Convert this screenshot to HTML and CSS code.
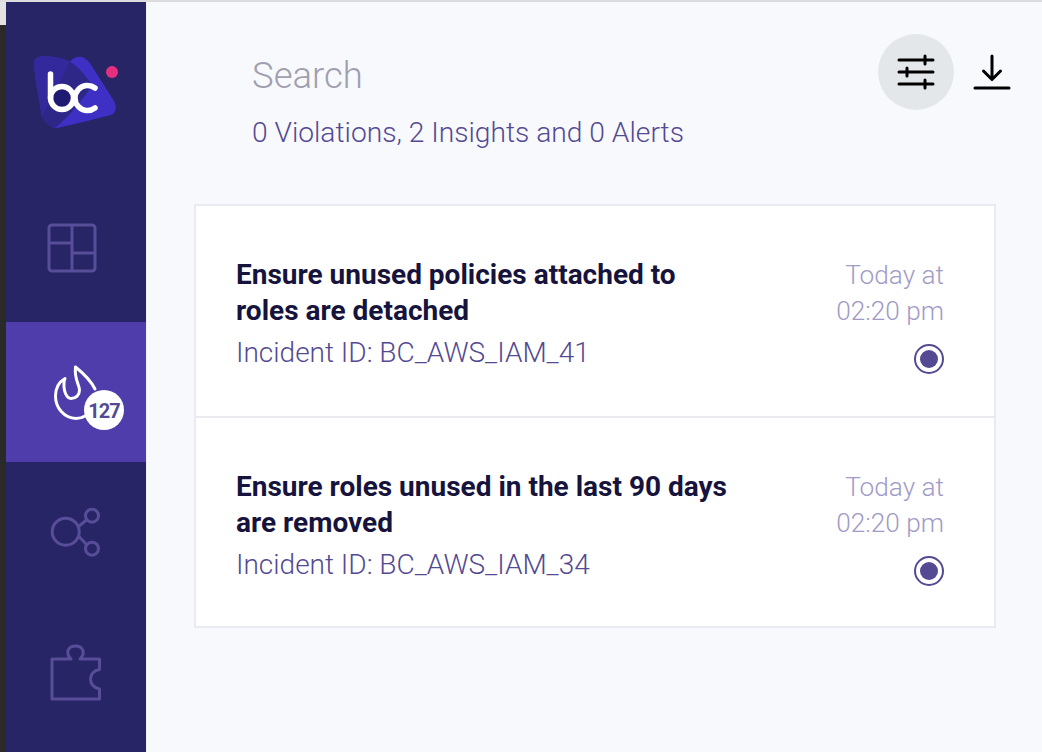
FILE: index.html
```html
<!DOCTYPE html>
<html lang="en">

<head>
  <meta charset="UTF-8">
  <meta name="viewport" content="width=device-width, initial-scale=1.0">
  <title>Incidents</title>
  <link rel="stylesheet" href="styles.css">
</head>

<body>
  <div class="gutter"></div>

  <nav class="sidebar">
    <div class="logo">
      <svg width="90" height="80" viewBox="0 0 90 80">
        <path d="M7 6 C12 3 16 4 20 4.500 C27 5 34 7 40 9.700 C43 5.500 50 3 55 6.500 C59 9 61 13 63 16 L84 49 C87 55 86 61 81 63 C62 68 44 72 27 76 C22 77 17 72 12 65 C9 47 5 28 4 12 C4 9 5 7 7 6 Z" fill="#3e30c4" />
        <path d="M7 6 C12 3 16 4 20 4.500 C27 5 34 7 40 9.700 C36 30 32 55 25 76 C20 75 15 70 12 65 C9 47 5 28 4 12 C4 9 5 7 7 6 Z" fill="#33289c" />
        <path d="M40 9.700 C50 16 58 26 62 34 C52 48 40 64 25 76 C20 75 15 70 12 65 Z" fill="#2e2788" />
        <circle cx="32" cy="46" r="11.500" fill="#1f1a72" stroke="#fff" stroke-width="5.500" />
        <path d="M20.500 22 V46" fill="none" stroke="#fff" stroke-width="5.500" stroke-linecap="round" />
        <path d="M65 36 A12.500 12.500 0 1 0 65 56" fill="none" stroke="#fff" stroke-width="5.500" stroke-linecap="round" />
        <circle cx="82" cy="20" r="6" fill="#e5307f" />
      </svg>
    </div>

    <a class="nav-item nudge" href="#">
      <svg width="50" height="50" viewBox="0 0 50 50" fill="none" stroke="#574d98" stroke-width="3" stroke-linejoin="round">
        <rect x="2" y="2" width="46" height="46" rx="3" />
        <path d="M25 2 V48 M2 20 H25 M25 30 H48" />
      </svg>
    </a>

    <a class="nav-item active" href="#">
      <span class="fire">
        <svg width="44" height="55" viewBox="0 0 44 55" fill="none" stroke="#fff" stroke-width="3" stroke-linecap="round" stroke-linejoin="round">
          <path d="M31 51 C28 53 25 53.500 22 53.500 C10 53 1.500 43 1.500 31 C1.500 23 5 17 11 13.500 C9 18 10 25 11.500 28.500 C13 32 15 33.500 17 33.500 C22 33.500 25.500 30 25.500 25 C25.500 20 20 14 21.500 2 C29 8 37 16 41 24" />
        </svg>
        <span class="badge">127</span>
      </span>
    </a>

    <a class="nav-item" href="#">
      <svg width="52" height="52" viewBox="0 0 52 52" fill="none" stroke="#574d98" stroke-width="3">
        <circle cx="15.700" cy="25.700" r="13.500" />
        <circle cx="42" cy="9.700" r="6.500" />
        <circle cx="42" cy="42.700" r="6.500" />
        <path d="M28.500 20.500 L36.500 14 M29 30.500 L36.500 38.500" />
      </svg>
    </a>

    <a class="nav-item" href="#">
      <svg width="52" height="57" viewBox="0 0 52 57" fill="none" stroke="#574d98" stroke-width="3" stroke-linejoin="round">
        <path d="M2 15 H21 C15 9 18 2 25.500 2 C33 2 36 9 30 15 H49.500 V25.500 C37.500 27 37.500 43 49.500 45 V55 H2 Z" />
      </svg>
    </a>
  </nav>

  <main class="content">
    <header class="top">
      <div>
        <div class="search">Search</div>
        <div class="summary">0 Violations, 2 Insights and 0 Alerts</div>
      </div>
      <div class="actions">
        <button class="icon-btn filter">
          <svg width="38" height="36" viewBox="0 0 38 36" fill="none" stroke="#000" stroke-width="3" stroke-linecap="round">
            <path d="M2 6 H36 M2 18 H36 M2 30 H36 M28 2 V10 M10 14 V22 M28 26 V34" />
          </svg>
        </button>
        <button class="icon-btn">
          <svg width="38" height="36" viewBox="0 0 38 36" fill="none" stroke="#000" stroke-width="3" stroke-linecap="round" stroke-linejoin="round">
            <path d="M19 2 V25 M10.500 17 L19 25.500 L27.500 17 M2 34 H36" />
          </svg>
        </button>
      </div>
    </header>

    <div class="card">
      <div class="card-text">
        <h3>Ensure unused policies attached to roles are detached</h3>
        <p>Incident ID: BC_AWS_IAM_41</p>
      </div>
      <div class="card-side">
        <div class="time">Today at<br>02:20 pm</div>
        <span class="status"></span>
      </div>
    </div>

    <div class="card">
      <div class="card-text">
        <h3>Ensure roles unused in the last 90 days are removed</h3>
        <p>Incident ID: BC_AWS_IAM_34</p>
      </div>
      <div class="card-side">
        <div class="time">Today at<br>02:20 pm</div>
        <span class="status"></span>
      </div>
    </div>
  </main>
</body>

</html>
```

FILE: styles.css
```css
* {
  box-sizing: border-box;
}

html,
body {
  height: 100%;
}

body {
  font-family: Roboto, Arial, sans-serif;
  margin: 0;
  display: flex;
  overflow: hidden;
  background: #f8f9fd;
  border-top: 2px solid #dcdcde;
}

.gutter {
  width: 6px;
  background: linear-gradient(#e2e2e2 23px, #2a2a28 23px);
}

.sidebar {
  width: 141px;
  background: #282566;
  border-right: 1px solid #f2f2fa;
  flex-shrink: 0;
}

.logo {
  height: 180px;
  padding: 50px 0 0 24px;
}

.logo svg {
  display: block;
}

.nav-item {
  display: flex;
  align-items: center;
  justify-content: center;
  height: 140px;
}

.nav-item.nudge {
  padding: 0 8px 8px 0;
}

.nav-item.active {
  background: #4e3daa;
}

.fire {
  position: relative;
  display: flex;
}

.badge {
  position: absolute;
  right: -26px;
  bottom: -10px;
  width: 40px;
  height: 40px;
  border-radius: 50%;
  background: #fff;
  color: #544a93;
  font-size: 20px;
  font-weight: 700;
  letter-spacing: -1px;
  line-height: 42px;
  text-align: center;
}

.content {
  flex: 1;
  padding: 32px 46px 0 47px;
}

.top {
  display: flex;
  justify-content: space-between;
  height: 170px;
  padding-left: 58px;
}

.search {
  font-size: 36.500px;
  font-weight: 300;
  color: #9f9fae;
  line-height: 42px;
  margin-top: 21px;
}

.summary {
  font-size: 28.200px;
  font-weight: 300;
  color: #544a93;
  line-height: 34px;
  margin-top: 19px;
}

.actions {
  display: flex;
  align-items: flex-start;
  margin-right: -34px;
}

.icon-btn {
  width: 76px;
  height: 76px;
  border: none;
  border-radius: 50%;
  padding: 0;
  background: none;
  display: flex;
  align-items: center;
  justify-content: center;
  cursor: pointer;
}

.filter {
  background: #e4e7ea;
}

.card {
  display: flex;
  justify-content: space-between;
  height: 214px;
  background: #fff;
  border: 2px solid #e9ebf1;
  padding: 51px 50px 0 40px;
}

.card + .card {
  margin-top: -2px;
  height: 212px;
}

.card-text {
  width: 500px;
}

.card h3 {
  margin: 0;
  font-size: 28px;
  font-weight: 700;
  line-height: 36px;
  color: #16143c;
}

.card p {
  margin: 7px 0 0;
  font-size: 28px;
  font-weight: 300;
  line-height: 34px;
  color: #544a93;
}

.card-side {
  display: flex;
  flex-direction: column;
  align-items: flex-end;
}

.time {
  font-size: 26.200px;
  font-weight: 300;
  line-height: 36px;
  color: #a19bc6;
  text-align: right;
}

.status {
  width: 30px;
  height: 30px;
  margin-top: 15px;
  border-radius: 50%;
  border: 2px solid #544a93;
  padding: 4px;
  background: #544a93 content-box;
}
```
